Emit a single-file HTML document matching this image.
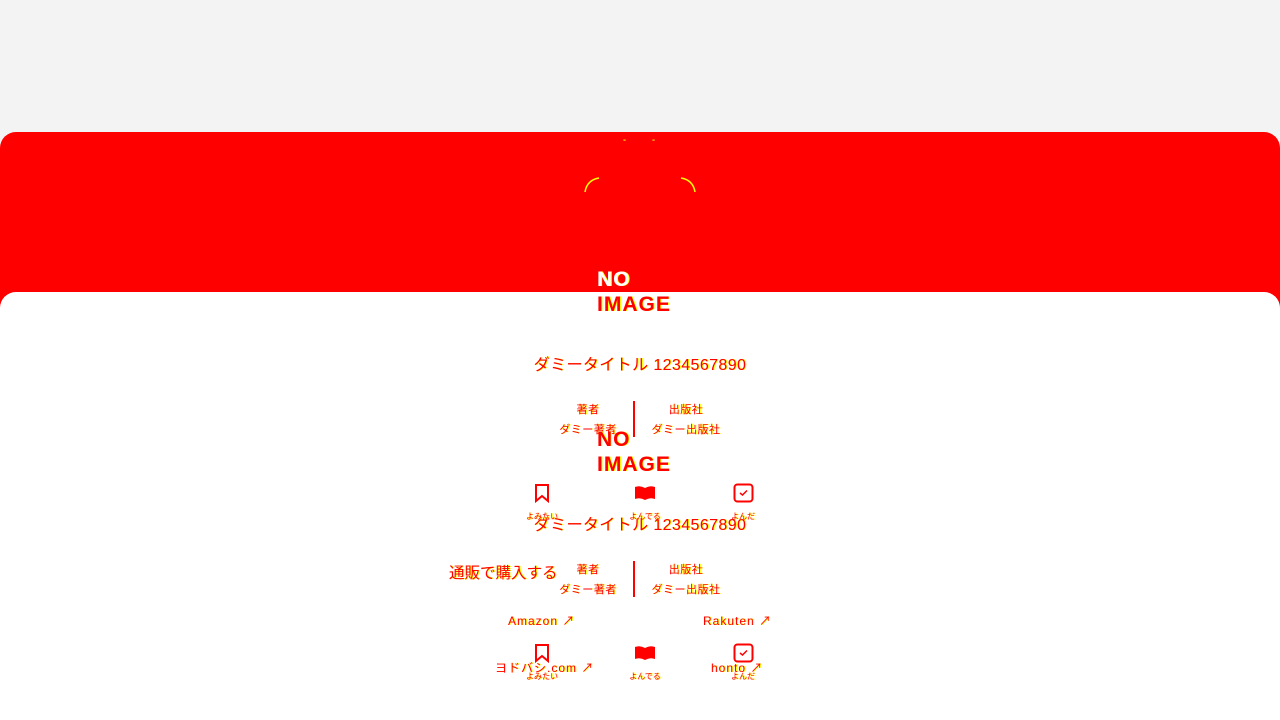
<!DOCTYPE html>
<html><head><meta charset="utf-8"><style>
body{margin:0;width:1280px;height:720px;background:#f3f3f3;position:relative;overflow:hidden;font-family:"Liberation Sans","Noto Sans CJK JP",sans-serif;color:#f00}
.red{position:absolute;left:0;top:132px;width:1280px;height:180px;background:#f00;border-radius:16px 16px 0 0}
.white{position:absolute;left:0;top:292px;width:1280px;height:428px;background:#fff;border-radius:16px 16px 0 0}
.t{position:absolute;white-space:nowrap;text-shadow:1px 0 0 #ff0}
.c{transform:translateX(-50%)}
.ni{font-weight:bold;font-size:21px;line-height:24px;letter-spacing:1px}
.title{font-size:16px;letter-spacing:0.4px}
.sm{font-size:11px;letter-spacing:0.5px}
.lk{font-size:12px;letter-spacing:1px}
.xs{font-size:8px}
.line{position:absolute;width:2px;background:#f00}
svg{position:absolute}
</style></head><body>
<div class="red"></div>
<div class="white"></div>
<svg style="left:583px;top:176px" width="114" height="20"><path d="M2 16 Q4 4 16 2" stroke="#ff0" fill="none" stroke-width="1.5"/><path d="M112 16 Q110 4 98 2" stroke="#ff0" fill="none" stroke-width="1.5"/></svg>
<div class="t" style="left:623px;top:138px;font-size:6px;color:#ff0">▫</div>
<div class="t" style="left:652px;top:138px;font-size:6px;color:#ff0">▫</div>

<div class="t ni" style="left:597px;top:268px;color:#fff">NO</div>
<div class="t ni" style="left:597px;top:293px">IMAGE</div>
<div class="t title c" style="left:640px;top:351px">ダミータイトル 1234567890</div>
<div class="t sm c" style="left:588px;top:401px">著者</div>
<div class="t sm c" style="left:588px;top:421px">ダミー著者</div>
<div class="line" style="left:633px;top:401px;height:36px"></div>
<div class="t sm c" style="left:686px;top:401px">出版社</div>
<div class="t sm c" style="left:686px;top:421px">ダミー出版社</div>

<div class="t ni" style="left:597px;top:428px">NO</div>
<div class="t ni" style="left:597px;top:453px">IMAGE</div>
<div class="t title c" style="left:640px;top:511px">ダミータイトル 1234567890</div>
<div class="t sm c" style="left:588px;top:561px">著者</div>
<div class="t sm c" style="left:588px;top:581px">ダミー著者</div>
<div class="line" style="left:633px;top:561px;height:36px"></div>
<div class="t sm c" style="left:686px;top:561px">出版社</div>
<div class="t sm c" style="left:686px;top:581px">ダミー出版社</div>

<svg style="left:534px;top:483px" width="16" height="20"><path d="M2 2H14V18L8 13L2 18Z" fill="none" stroke="#f00" stroke-width="2"/></svg>
<svg style="left:634px;top:485px" width="22" height="16"><path d="M1 2Q6 0 11 3Q16 0 21 2V14Q16 12 11 15Q6 12 1 14Z" fill="#f00"/></svg>
<svg style="left:733px;top:483px" width="21" height="20"><rect x="1.5" y="1.5" width="18" height="17" rx="3" fill="none" stroke="#f00" stroke-width="2"/><path d="M7 10L9.5 12L14 7.5" stroke="#f00" stroke-width="1.5" fill="none"/></svg>
<div class="t xs c" style="left:542px;top:511px">よみたい</div>
<div class="t xs c" style="left:645px;top:511px">よんでる</div>
<div class="t xs c" style="left:743px;top:511px">よんだ</div>

<svg style="left:534px;top:643px" width="16" height="20"><path d="M2 2H14V18L8 13L2 18Z" fill="none" stroke="#f00" stroke-width="2"/></svg>
<svg style="left:634px;top:645px" width="22" height="16"><path d="M1 2Q6 0 11 3Q16 0 21 2V14Q16 12 11 15Q6 12 1 14Z" fill="#f00"/></svg>
<svg style="left:733px;top:643px" width="21" height="20"><rect x="1.5" y="1.5" width="18" height="17" rx="3" fill="none" stroke="#f00" stroke-width="2"/><path d="M7 10L9.5 12L14 7.5" stroke="#f00" stroke-width="1.5" fill="none"/></svg>
<div class="t xs c" style="left:542px;top:671px">よみたい</div>
<div class="t xs c" style="left:645px;top:671px">よんでる</div>
<div class="t xs c" style="left:743px;top:671px">よんだ</div>

<div class="t" style="left:449px;top:561px;font-size:15.5px">通販で購入する</div>
<div class="t lk" style="left:508px;top:612px">Amazon ↗</div>
<div class="t lk" style="left:703px;top:612px">Rakuten ↗</div>
<div class="t lk" style="left:495px;top:659px">ヨドバシ.com ↗</div>
<div class="t lk" style="left:711px;top:659px">honto ↗</div>
</body></html>
